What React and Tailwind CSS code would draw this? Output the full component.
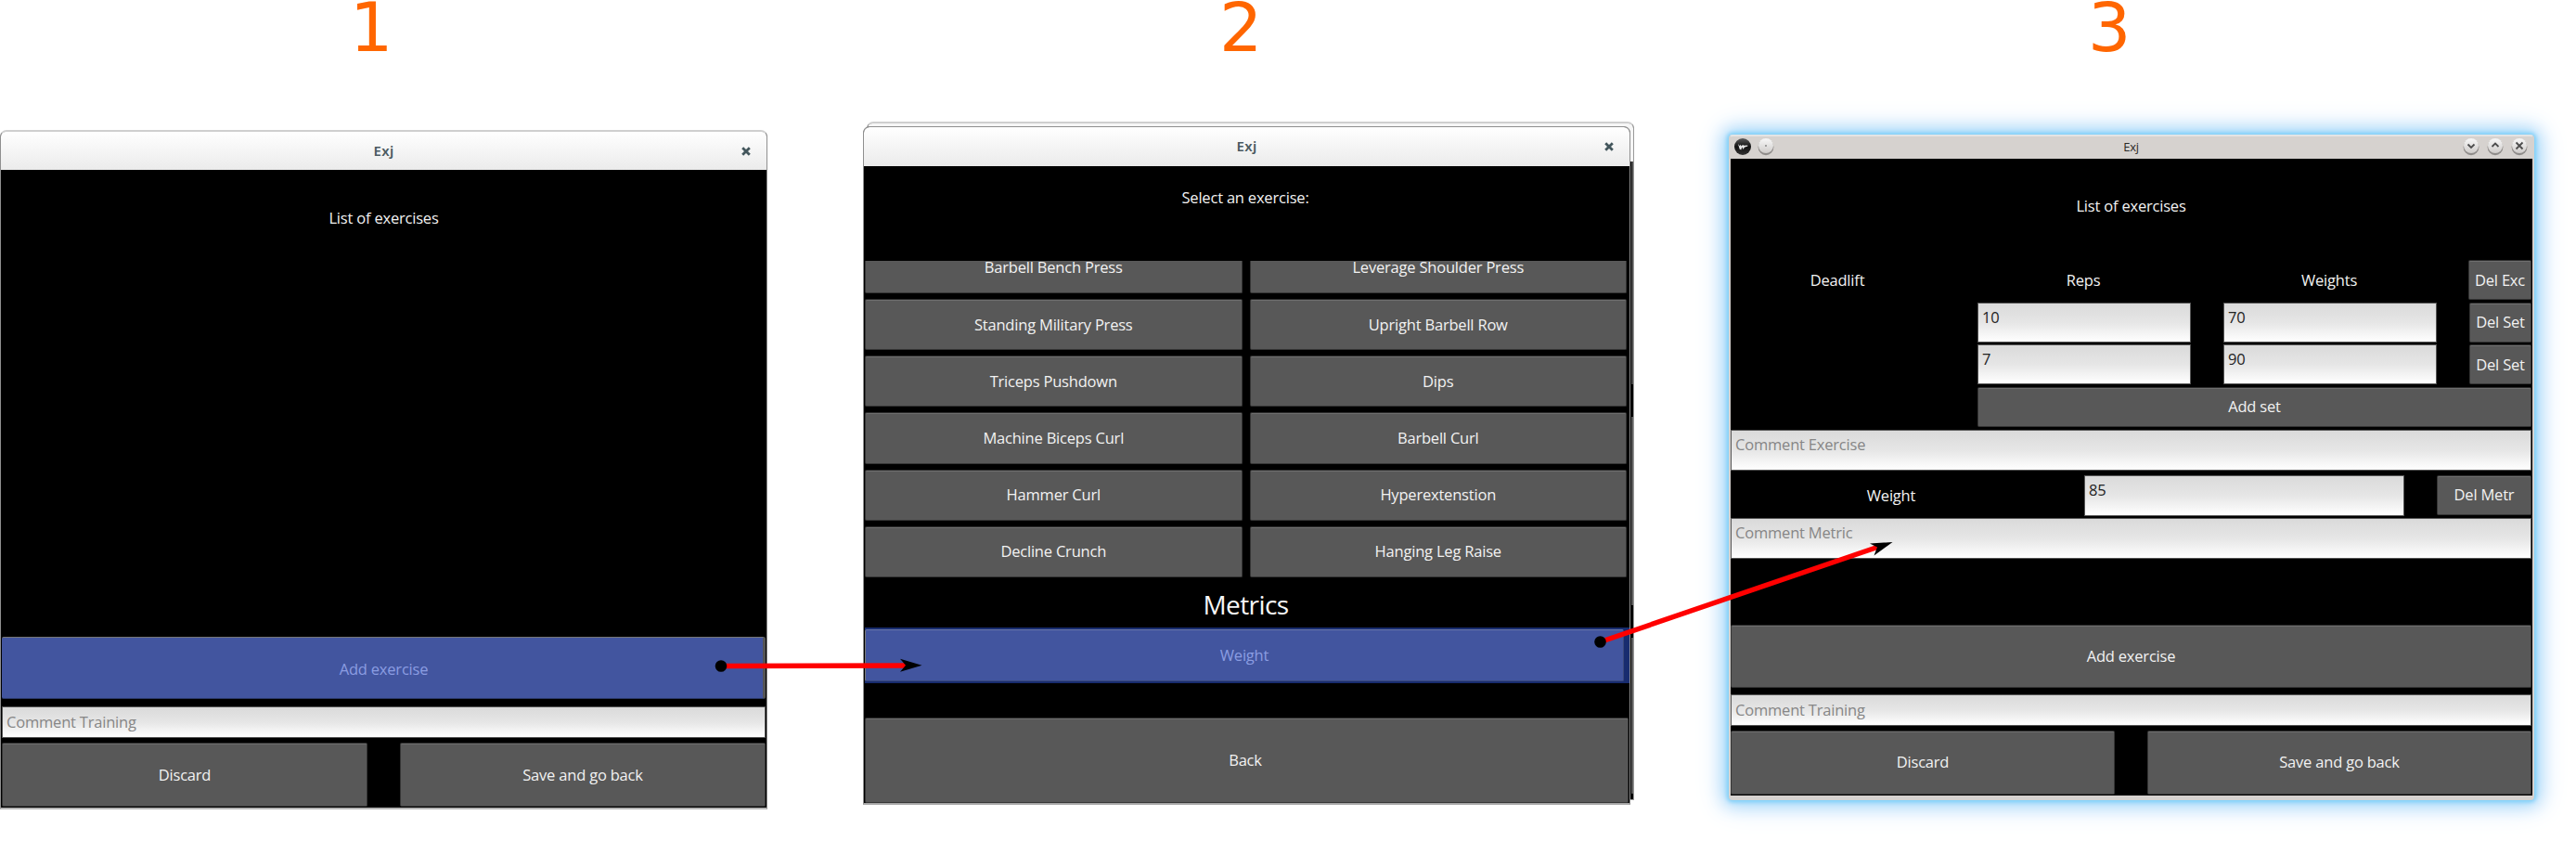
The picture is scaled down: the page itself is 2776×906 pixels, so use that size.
const BUTTON =
  'flex shrink-0 items-center justify-center rounded-[2px] border border-[#353535] border-t-[#2b2b2b] bg-[#585858] text-[#f2f2f2] shadow-[inset_0_1px_0_#6e6e6e]';
const INPUT =
  'shrink-0 border border-[#555555] bg-linear-to-b from-[#dadada] via-[#e6e6e6] to-[#ffffff] pl-1';

function Button({ className = '', children }) {
  return <div className={`${BUTTON} ${className}`}>{children}</div>;
}

function Field({ className = '', children }) {
  return <div className={`${INPUT} ${className}`}>{children}</div>;
}

function GnomeTitle({ className = '' }) {
  return (
    <div
      className={`flex shrink-0 items-center bg-linear-to-b from-[#ffffff] to-[#ebebeb] pl-[27px] font-['Noto_Sans'] text-[15px] font-semibold tracking-[0.3px] text-[#4a5a60] ${className}`}
    >
      <div className="flex-1 pb-[2px] text-center">Exj</div>
      <svg className="mr-[17px] h-[10px] w-[10px]" viewBox="0 0 10 10">
        <path d="M1.2 1.2L8.8 8.8M8.8 1.2L1.2 8.8" stroke="#43565c" strokeWidth="2.8" />
      </svg>
    </div>
  );
}

function WindowOne() {
  return (
    <section className="absolute top-[140px] left-0 flex h-[732px] w-[827px] flex-col rounded-t-[7px] border border-t-2 border-b-2 border-[#8f8f8f] border-t-[#cfcfcf] border-b-[#b5b5b5] bg-black">
      <GnomeTitle className="h-[41px] rounded-t-[5px]" />
      <div className="flex h-[503px] shrink-0 items-start justify-center pt-[41px] text-[#f2f2f2]">
        List of exercises
      </div>
      <div className="flex flex-col px-px">
        <div className="flex h-[67px] shrink-0 items-center justify-center rounded-[2px] border-t border-r-[3px] border-b border-t-[#777777] border-r-[#555555] border-b-[#2b3866] bg-[#42559f] pt-[2px] pl-[3px] text-[#8b9de2]">
          Add exercise
        </div>
        <Field className="mt-[8px] flex h-[34px] items-center text-[#868686]">Comment Training</Field>
        <div className="mt-[5px] flex gap-[35px]">
          <Button className="h-[69px] flex-1">Discard</Button>
          <Button className="h-[69px] flex-1">Save and go back</Button>
        </div>
      </div>
    </section>
  );
}

const EXERCISES = [
  'Barbell Bench Press',
  'Leverage Shoulder Press',
  'Standing Military Press',
  'Upright Barbell Row',
  'Triceps Pushdown',
  'Dips',
  'Machine Biceps Curl',
  'Barbell Curl',
  'Hammer Curl',
  'Hyperextenstion',
  'Decline Crunch',
  'Hanging Leg Raise',
];

function WindowTwo() {
  return (
    <>
      <div className="absolute top-[131px] left-[934px] flex h-[731px] w-[827px] flex-col rounded-t-[7px] border border-t-2 border-[#9a9a9a] border-t-[#cfcfcf] bg-black">
        <div className="h-[41px] rounded-t-[5px] bg-[#f6f6f6]" />
        <div className="ml-auto h-[240px] w-[2px] bg-[#4a4a4a]" />
        <div className="mt-[35px] ml-auto h-[203px] w-[2px] bg-[#5c5c5c]" />
        <div className="mt-[35px] ml-auto h-[168px] w-[2px] bg-[#5c5c5c]" />
      </div>
      <section className="absolute top-[136px] left-[930px] flex h-[731px] w-[827px] flex-col rounded-t-[7px] border border-b-2 border-[#8f8f8f] border-b-[#a5a5a5] bg-black">
        <GnomeTitle className="h-[42px] rounded-t-[6px]" />
        <div className="flex h-[102px] shrink-0 justify-center pt-[23px] pr-[3px] text-[#f2f2f2]">
          <span>Select an exercise:</span>
        </div>
        <div className="flex h-[341px] shrink-0 flex-col justify-end overflow-hidden pr-[3px] pl-px">
          <div className="grid grid-cols-2 gap-x-[8px] gap-y-[6px]">
            {EXERCISES.map((name) => (
              <Button key={name} className="h-[55.2px]">
                {name}
              </Button>
            ))}
          </div>
        </div>
        <div className="flex h-[54px] shrink-0 items-center justify-center pt-[3px] pr-[2px] text-[28px] tracking-[-0.6px] text-[#f7f7f7]">
          Metrics
        </div>
        <div className="ml-px flex h-[60px] shrink-0 bg-[#182c6f] py-[2px] pr-[6px]">
          <div className="flex flex-1 items-center justify-center rounded-[2px] border border-[#3b4a7d] border-t-[#6b78aa] border-l-[#777] bg-[#42559f] text-[#8b9de2]">
            Weight
          </div>
        </div>
        <div className="mt-[37px] flex px-px">
          <Button className="h-[92px] flex-1 pr-[3px]">Back</Button>
        </div>
      </section>
    </>
  );
}

function Round({ children }) {
  return (
    <svg className="h-[20px] w-[18px]" viewBox="0 0 18 20">
      <ellipse cx="9" cy="10.4" rx="8.4" ry="8.8" fill="#8f8c8a" />
      <circle cx="9" cy="9" r="8" fill="url(#knob)" />
      {children}
    </svg>
  );
}

function KdeTitle() {
  return (
    <div className="flex h-[24px] shrink-0 items-center pr-[5px] pb-[2px] pl-[3px]">
      <svg className="h-[20px] w-[20px]" viewBox="0 0 20 20">
        <defs>
          <linearGradient id="knob" x1="0" y1="0" x2="0" y2="1">
            <stop offset="0" stopColor="#f8f8f8" />
            <stop offset="1" stopColor="#cfccca" />
          </linearGradient>
          <linearGradient id="ball" x1="0" y1="0" x2="0" y2="1">
            <stop offset="0" stopColor="#5a5a5a" />
            <stop offset="0.5" stopColor="#111" />
            <stop offset="1" stopColor="#333" />
          </linearGradient>
        </defs>
        <circle cx="10" cy="10" r="9" fill="url(#ball)" />
        <path d="M5 7L6.6 12.5L8.2 13.5L9.4 10.5L10.6 13L11.8 10.8L15.5 9.6L15.2 8.6L11.5 8.8L10 8L8.6 9.4L7.6 7.8L6.8 9.2Z" fill="#e8e8e8" />
      </svg>
      <div className="ml-[6px] flex">
        <Round>
          <circle cx="9" cy="9" r="1" fill="#888" />
        </Round>
      </div>
      <div className="flex-1 pl-[27px] text-center text-[13px] text-[#2d2a28]">Exj</div>
      <div className="flex gap-[8px]">
        <Round>
          <path d="M5.5 7.5L9 11L12.5 7.5" fill="none" stroke="#4c4c4c" strokeWidth="1.8" />
        </Round>
        <Round>
          <path d="M5.5 10L9 6.5L12.5 10" fill="none" stroke="#4c4c4c" strokeWidth="1.8" />
        </Round>
        <Round>
          <path d="M5.5 5.5L12.5 12.5M12.5 5.5L5.5 12.5" fill="none" stroke="#4c4c4c" strokeWidth="1.8" />
        </Round>
      </div>
    </div>
  );
}

function SetRow({ reps, weight }) {
  return (
    <div className="flex h-[43px] shrink-0 gap-[35px]">
      <Field className="w-[230px] pt-[4px] text-[#222]">{reps}</Field>
      <Field className="w-[230px] pt-[4px] text-[#222]">{weight}</Field>
      <Button className="h-[43px] flex-1">Del Set</Button>
    </div>
  );
}

function WindowThree() {
  return (
    <section className="absolute top-[145px] left-[1863px] flex h-[717px] w-[868px] flex-col rounded-[4px] border-2 border-t-2 border-b-[5px] border-[#d6d2cf] border-t-[#e4e4e4] bg-[#d6d2cf] shadow-[0_0_4px_2px_#7ccff8,0_0_18px_5px_#9fd6fa,0_0_30px_8px_#d8e9fb]">
      <KdeTitle />
      <div className="flex flex-1 flex-col bg-black pr-px text-[#f2f2f2]">
        <div className="flex h-[109px] shrink-0 justify-center pt-[40px]">
          <span>List of exercises</span>
        </div>
        <div className="flex h-[45.5px] shrink-0">
          <div className="flex h-[44px] w-[230px] items-center justify-center">Deadlift</div>
          <div className="ml-[35px] flex h-[44px] w-[230px] items-center justify-center">Reps</div>
          <div className="ml-[35px] flex h-[44px] w-[230px] items-center justify-center">Weights</div>
          <Button className="ml-[35px] h-[43px] flex-1">Del Exc</Button>
        </div>
        <div className="flex flex-col gap-[2.5px] pl-[266px]">
          <SetRow reps="10" weight="70" />
          <SetRow reps="7" weight="90" />
          <Button className="h-[43.5px]">Add set</Button>
        </div>
        <Field className="mt-[2.5px] h-[44px] pt-[4px] text-[#868686]">Comment Exercise</Field>
        <div className="mt-[5px] flex h-[44px] shrink-0">
          <div className="flex w-[346px] items-center justify-center">Weight</div>
          <Field className="ml-[35px] w-[345px] pt-[4px] text-[#222]">85</Field>
          <Button className="ml-[35px] h-[43px] flex-1">Del Metr</Button>
        </div>
        <Field className="mt-[2px] h-[44px] pt-[4px] text-[#868686]">Comment Metric</Field>
        <Button className="mt-[71px] h-[68px]">Add exercise</Button>
        <Field className="mt-[7px] flex h-[34px] items-center text-[#868686]">Comment Training</Field>
        <div className="mt-[5px] flex gap-[35px]">
          <Button className="h-[69px] flex-1">Discard</Button>
          <Button className="h-[69px] flex-1">Save and go back</Button>
        </div>
      </div>
    </section>
  );
}

function Flow() {
  return (
    <svg className="absolute top-0 left-0 h-[906px] w-[2776px]" viewBox="0 0 2776 906">
      <line x1="777" y1="717.5" x2="976" y2="717" stroke="#f00" strokeWidth="5.5" />
      <circle cx="777" cy="717.5" r="6.3" />
      <path d="M993.5 716.8L970 709.8L976 716.8L970 723.8Z" />
      <line x1="1724.5" y1="691.5" x2="2023" y2="589.5" stroke="#f00" strokeWidth="5.5" />
      <circle cx="1724.5" cy="691.5" r="6.3" />
      <path d="M2039.5 584L2015 585.5L2023 589.5L2019.5 598.5Z" />
    </svg>
  );
}

export default function App() {
  return (
    <main className="relative h-[906px] w-[2776px] overflow-hidden bg-white font-['Open_Sans','Noto_Sans',sans-serif] text-[16.5px] leading-[22px] tracking-[-0.2px]">
      <header className="flex font-['DejaVu_Sans'] text-[73px] leading-[60px] tracking-normal text-[#ff6600]">
        <div className="w-[936px] pl-[377px]">1</div>
        <div className="w-[936px] pl-[378px]">2</div>
        <div className="w-[904px] pl-[378px]">3</div>
      </header>
      <WindowOne />
      <WindowTwo />
      <WindowThree />
      <Flow />
    </main>
  );
}
